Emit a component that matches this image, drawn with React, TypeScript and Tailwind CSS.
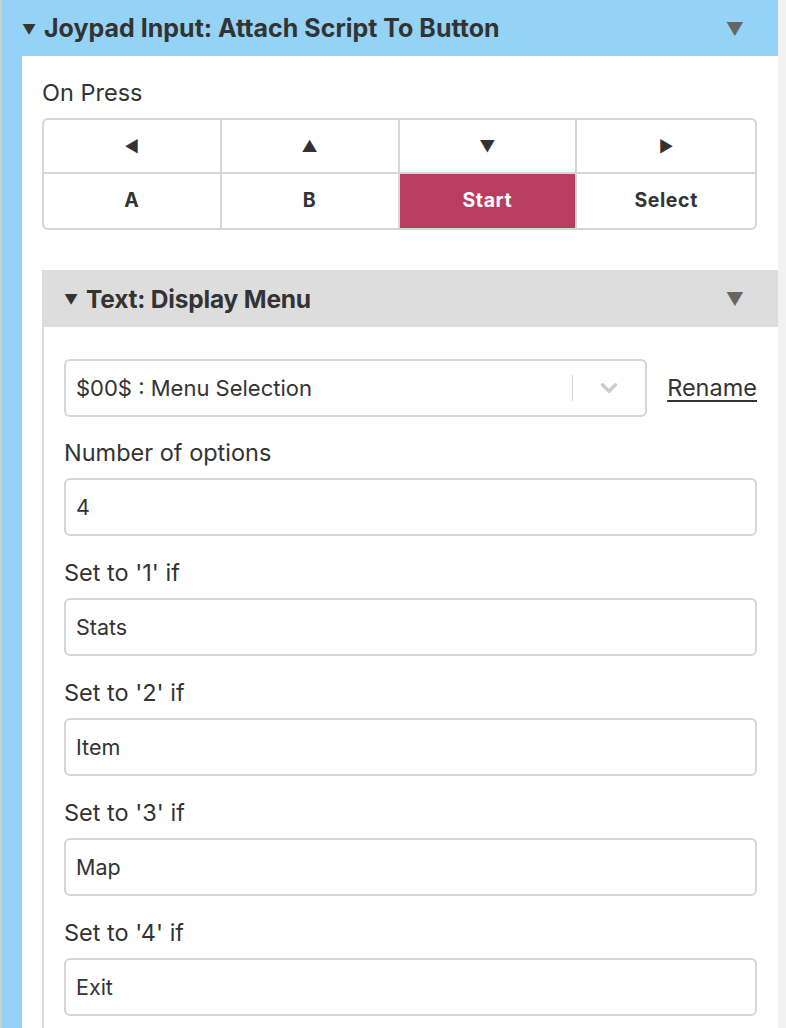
import React from 'react';
import { ChevronDown } from 'lucide-react';

const font = { fontFamily: 'Inter, "Liberation Sans", sans-serif' };

function Field({ label, value, first }: { label: string; value: string; first?: boolean }) {
  return (
    <div className="flex flex-col">
      <label className={`text-[23.5px] leading-6 text-[#333] h-6 ${first ? 'mt-[24px]' : 'mt-[25px]'}`}>{label}</label>
      <div className="mt-[13px] h-[58px] border-2 border-[#d6d6d6] rounded-[6px] flex items-center px-[10px] text-[21.5px] text-[#333]">
        {value}
      </div>
    </div>
  );
}

export default function App() {
  const arrows = ['◀', '▲', '▼', '▶'];
  const buttons = ['A', 'B', 'Start', 'Select'];

  return (
    <div className="w-[786px] h-[1028px] overflow-hidden bg-[#f2f2f2] flex flex-col" style={font}>
      <div className="h-[2px] w-[778px] bg-[#d0d0d0]" />
      <div className="flex flex-1">
        <div className="w-[2px] bg-[#d0d0d0]" />
        <div className="w-[776px] bg-[#94d3f5] flex flex-col">
          {/* Outer header */}
          <div className="h-[56px] flex items-center pl-[20px] pr-[34px] pt-[2px]">
            <span className="text-[14px] text-[#333] w-[22px]">▼</span>
            <span className="text-[25px] font-bold text-[#333] flex-1">Joypad Input: Attach Script To Button</span>
            <span className="text-[18px] text-[#666]">▼</span>
          </div>

          <div className="ml-[20px] flex-1 bg-white flex flex-col pl-[20px]">
            <div className="text-[23.5px] leading-6 text-[#333] mt-[25px]">On Press</div>

            <div className="mt-[13px] mr-[21px] border-2 border-[#d6d6d6] rounded-[6px] grid grid-cols-4 overflow-hidden">
              {arrows.map((a, i) => (
                <div
                  key={a}
                  className={`h-[54px] flex items-center justify-center text-[16px] text-[#333] border-b-2 border-[#d6d6d6] ${i < 3 ? 'border-r-2' : ''}`}
                >
                  {a}
                </div>
              ))}
              {buttons.map((b, i) => (
                <div
                  key={b}
                  className={`h-[54px] flex items-center justify-center text-[19.5px] font-bold tracking-[0.6px] border-[#d6d6d6] ${i < 3 ? 'border-r-2' : ''} ${b === 'Start' ? 'bg-[#b93d5f] text-white' : 'text-[#333]'}`}
                >
                  {b}
                </div>
              ))}
            </div>

            {/* Inner section */}
            <div className="mt-[40px] flex flex-col">
              <div className="h-[57px] bg-[#dddddd] flex items-center pl-[22px] pr-[34px] pt-[2px]">
                <span className="text-[14px] text-[#333] w-[22px]">▼</span>
                <span className="text-[24.5px] font-bold text-[#333] flex-1 tracking-[-0.2px]">Text: Display Menu</span>
                <span className="text-[18px] text-[#666]">▼</span>
              </div>
              <div className="border-l-2 border-[#dddddd] pl-[20px] pr-[21px] pb-10">
                <div className="mt-[32px] flex items-center gap-[20px]">
                  <div className="flex-1 h-[58px] border-2 border-[#d6d6d6] rounded-[6px] flex items-center pl-[10px]">
                    <span className="flex-1 text-[22px] text-[#333]">$00$ : Menu Selection</span>
                    <span className="w-px h-[26px] bg-[#d6d6d6]" />
                    <span className="w-[72px] flex justify-center">
                      <ChevronDown className="w-[26px] h-[26px] text-[#cccccc]" strokeWidth={3} />
                    </span>
                  </div>
                  <span className="text-[23.5px] text-[#333] underline underline-offset-4">Rename</span>
                </div>
                <Field label="Number of options" value="4" first />
                <Field label="Set to '1' if" value="Stats" />
                <Field label="Set to '2' if" value="Item" />
                <Field label="Set to '3' if" value="Map" />
                <Field label="Set to '4' if" value="Exit" />
              </div>
            </div>
          </div>
        </div>
      </div>
    </div>
  );
}
